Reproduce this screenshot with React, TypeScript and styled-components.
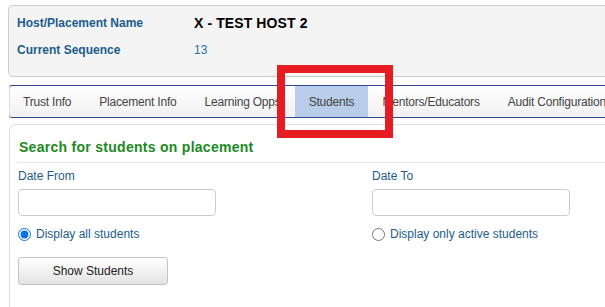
import React from "react";
import styled, { createGlobalStyle } from "styled-components";

const Global = createGlobalStyle`
  html, body { margin: 0; padding: 0; background: #fff; overflow: hidden; }
  body { font-family: "Liberation Sans", Arial, sans-serif; font-size: 12px; }
`;

const Page = styled.div`
  position: relative;
  width: 640px;
  height: 307px;
  overflow: hidden;
  padding: 5px 0 0 8px;
  box-sizing: border-box;
`;

const InfoPanel = styled.div`
  background: #f4f4f4;
  border: 1px solid #cccccc;
  border-radius: 5px;
  padding: 3px 0 13px 8px;
  display: grid;
  grid-template-columns: 177px 1fr;
  grid-auto-rows: 27px;
  align-items: center;
`;

const InfoLabel = styled.div`
  font-weight: bold;
  color: #1c5d8c;
  font-size: 12px;
`;

const InfoValue = styled.div<{ $big?: boolean }>`
  color: ${(p) => (p.$big ? "#000" : "#2070ab")};
  font-weight: ${(p) => (p.$big ? "bold" : "normal")};
  font-size: ${(p) => (p.$big ? "14px" : "12px")};
  letter-spacing: ${(p) => (p.$big ? "0.1px" : "0")};
`;

const TabBar = styled.div`
  margin: 8px 0 0 1px;
  display: flex;
  height: 31px;
  border-top: 1px solid #2d4b97;
  border-bottom: 1px solid #2d4b97;
  border-radius: 3px 0 0 3px;
  background: linear-gradient(#ffffff, #f0f0f0);
  box-shadow: inset 1px 0 0 #dddddd;
`;

const Tab = styled.div<{ $active?: boolean }>`
  padding: 0 14px;
  display: flex;
  align-items: center;
  white-space: nowrap;
  color: #444444;
  font-size: 12px;
  letter-spacing: -0.2px;
  background: ${(p) => (p.$active ? "#b7cde8" : "transparent")};
`;

const ContentPanel = styled.div`
  margin: 6px 0 0 1px;
  border: 1px solid #dddddd;
  border-radius: 6px;
  padding: 13px 8px 20px 8px;
  height: 200px;
`;

const Heading = styled.h3`
  margin: 0 0 0 1px;
  font-size: 14px;
  font-weight: bold;
  color: #1c8a1c;
  line-height: 18px;
  letter-spacing: 0.28px;
`;

const Rule = styled.hr`
  border: 0;
  border-top: 1px solid #e4e4e4;
  margin: 6px 0 0 0;
`;

const FormGrid = styled.div`
  display: grid;
  grid-template-columns: 354px 1fr;
  margin-top: 6px;
`;

const Field = styled.div`
  display: flex;
  flex-direction: column;
`;

const FieldLabel = styled.label`
  color: #1c5d8c;
  font-size: 12px;
  line-height: 15px;
`;

const TextInput = styled.input`
  margin-top: 5px;
  width: 198px;
  height: 27px;
  box-sizing: border-box;
  border: 1px solid #cccccc;
  border-radius: 4px;
  background: #fff;
`;

const RadioRow = styled.label`
  margin-top: 11px;
  display: flex;
  align-items: center;
  gap: 5px;
  color: #1c5d8c;
  font-size: 12px;
  height: 14px;
`;

const Radio = styled.input`
  margin: 0;
  width: 13px;
  height: 13px;
  accent-color: #0b72e7;
`;

const Button = styled.button`
  margin-top: 16px;
  width: 150px;
  height: 28px;
  border: 1px solid #c4c4c4;
  border-radius: 3px;
  background: linear-gradient(#ffffff, #e3e3e3);
  font-family: "Liberation Sans", Arial, sans-serif;
  font-size: 12px;
  color: #222;
  padding: 0;
`;

const Highlight = styled.div`
  position: absolute;
  left: 277px;
  top: 65px;
  width: 116px;
  height: 73px;
  box-sizing: border-box;
  border: 8px solid #e71b22;
  pointer-events: none;
`;

export default function App() {
  const tabs = [
    "Trust Info",
    "Placement Info",
    "Learning Opps",
    "Students",
    "Mentors/Educators",
    "Audit Configuration",
  ];
  return (
    <>
      <Global />
      <Page>
        <InfoPanel>
          <InfoLabel>Host/Placement Name</InfoLabel>
          <InfoValue $big>X - TEST HOST 2</InfoValue>
          <InfoLabel>Current Sequence</InfoLabel>
          <InfoValue>13</InfoValue>
        </InfoPanel>
        <TabBar>
          {tabs.map((t) => (
            <Tab key={t} $active={t === "Students"}>
              {t}
            </Tab>
          ))}
        </TabBar>
        <ContentPanel>
          <Heading>Search for students on placement</Heading>
          <Rule />
          <FormGrid>
            <Field>
              <FieldLabel>Date From</FieldLabel>
              <TextInput type="text" />
              <RadioRow>
                <Radio type="radio" name="disp" defaultChecked />
                Display all students
              </RadioRow>
              <div>
                <Button>Show Students</Button>
              </div>
            </Field>
            <Field>
              <FieldLabel>Date To</FieldLabel>
              <TextInput type="text" />
              <RadioRow>
                <Radio type="radio" name="disp" />
                Display only active students
              </RadioRow>
            </Field>
          </FormGrid>
        </ContentPanel>
        <Highlight />
      </Page>
    </>
  );
}
